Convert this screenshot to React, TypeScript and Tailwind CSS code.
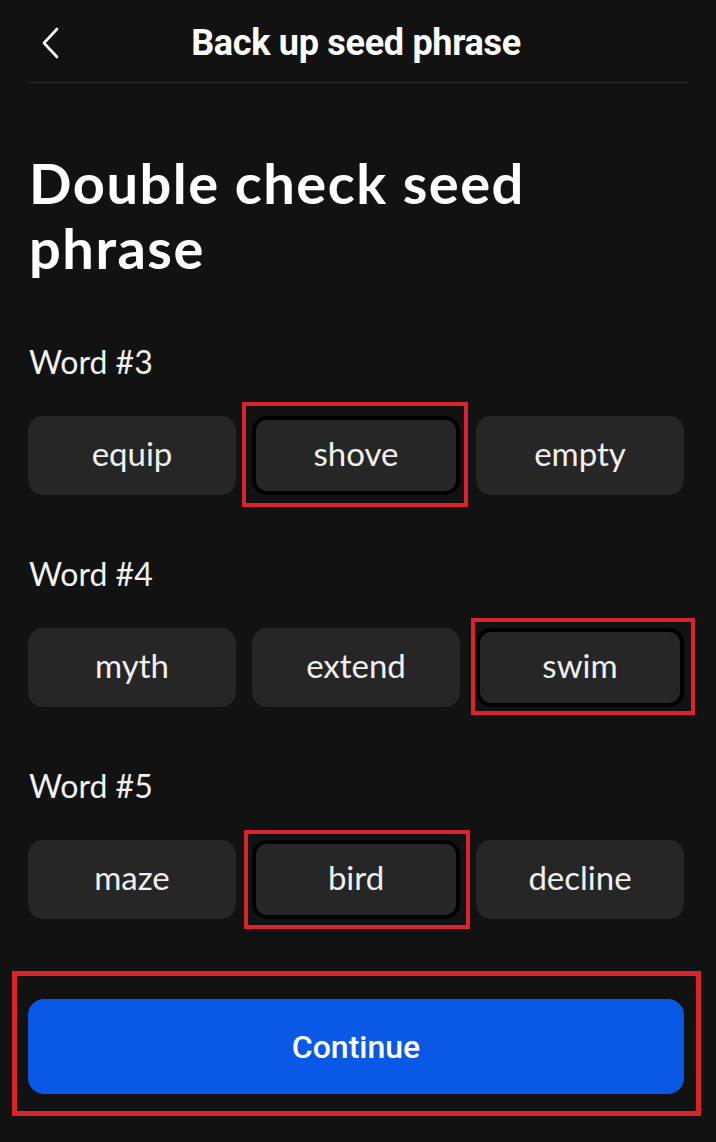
import React from "react";

type Opt = { w: string; sel?: boolean; box?: string };

const rows: { label: string; opts: Opt[] }[] = [
  {
    label: "Word #3",
    opts: [
      { w: "equip" },
      { w: "shove", sel: true, box: "-left-[10px] -right-[8px] -top-[14px] -bottom-[12px]" },
      { w: "empty" },
    ],
  },
  {
    label: "Word #4",
    opts: [
      { w: "myth" },
      { w: "extend" },
      { w: "swim", sel: true, box: "-left-[5px] -right-[11px] -top-[10px] -bottom-[8px]" },
    ],
  },
  {
    label: "Word #5",
    opts: [
      { w: "maze" },
      { w: "bird", sel: true, box: "-left-[8px] -right-[10px] -top-[10px] -bottom-[10px]" },
      { w: "decline" },
    ],
  },
];

export default function App() {
  return (
    <div className="w-[716px] h-[1142px] bg-[#121212] text-white overflow-hidden flex flex-col pl-[28px] pr-[32px]">
      {/* Header */}
      <div className="relative h-[83px] -mr-[4px] flex items-center justify-center border-b border-[#2a2a2a] shrink-0">
        <svg
          className="absolute left-[12px] top-[27px]"
          width="22"
          height="32"
          viewBox="0 0 22 32"
          fill="none"
        >
          <path d="M17 2 L4 16 L17 30" stroke="white" strokeWidth="2.6" strokeLinecap="round" strokeLinejoin="round" />
        </svg>
        <div
          className="text-[36px] font-bold tracking-[-0.3px] mt-[3px] pr-[4px]"
          style={{ fontFamily: "Roboto, 'Liberation Sans', sans-serif" }}
        >
          Back up seed phrase
        </div>
      </div>

      <div style={{ fontFamily: "Lato, 'Noto Sans', sans-serif" }} className="flex flex-col">
        <h1 className="mt-[67px] text-[56px] leading-[65px] font-bold tracking-[1.5px] pl-[1px]">
          Double check seed
          <br />
          phrase
        </h1>

        <div className="flex flex-col gap-[60px] mt-[63px]">
          {rows.map((r) => (
            <div key={r.label} className="flex flex-col">
              <div className="text-[32px] leading-[38px] pl-[1px] text-[#f2f2f2]">{r.label}</div>
              <div className="grid grid-cols-3 gap-[16px] mt-[35px]">
                {r.opts.map((o) => (
                  <div key={o.w} className="relative">
                    {o.box && <div className={`absolute border-[4px] border-[#d9232d] ${o.box}`} />}
                    <div
                      className={`h-[79px] rounded-[15px] bg-[#262626] flex items-center justify-center text-[33px] text-[#f0f0f0] ${
                        o.sel ? "border-[4px] border-black" : ""
                      }`}
                    >
                      <span className="-mt-[3px]">{o.w}</span>
                    </div>
                  </div>
                ))}
              </div>
            </div>
          ))}
        </div>
      </div>

      <div className="relative mt-[80px]">
        <div className="absolute -left-[16px] -right-[17px] -top-[28px] -bottom-[22px] border-[5px] border-[#d9232d]" />
        <div
          className="relative h-[95px] rounded-[16px] bg-[#0a58e6] flex items-center justify-center text-[32px] font-medium"
          style={{ fontFamily: "Roboto, 'Liberation Sans', sans-serif" }}
        >
          Continue
        </div>
      </div>
    </div>
  );
}
